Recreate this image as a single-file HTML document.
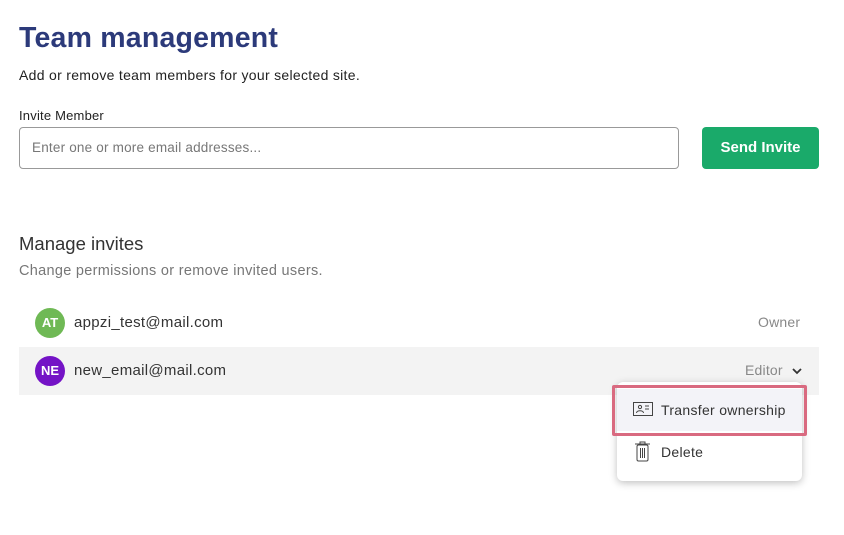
<!DOCTYPE html>
<html><head><style>
*{margin:0;padding:0;box-sizing:border-box}
body{width:844px;height:535px;background:#fff;font-family:"Liberation Sans",sans-serif;position:relative;overflow:hidden;color:#222}
.a{position:absolute;white-space:nowrap}
h1{position:absolute;left:19px;top:22px;font-size:28.5px;font-weight:bold;color:#2c3a7a;letter-spacing:0.2px}
.av{position:absolute;width:30px;height:30px;border-radius:50%;color:#fff;font-weight:bold;font-size:13px;text-align:center;line-height:30px}
</style></head><body>
<h1>Team management</h1>
<div class="a" style="left:19px;top:67px;font-size:14px;letter-spacing:0.3px;color:#222">Add or remove team members for your selected site.</div>
<div class="a" style="left:19px;top:108px;font-size:13px;letter-spacing:0.2px;color:#222">Invite Member</div>
<div class="a" style="left:19px;top:127px;width:660px;height:42px;border:1px solid #999;border-radius:4px"></div>
<div class="a" style="left:32px;top:140px;font-size:13.5px;letter-spacing:0.2px;color:#777">Enter one or more email addresses...</div>
<div class="a" style="left:702px;top:127px;width:117px;height:42px;background:#1aaa6a;border-radius:4px;color:#fff;font-weight:bold;font-size:15px;text-align:center;line-height:42px">Send Invite</div>
<div class="a" style="left:19px;top:233px;font-size:18.5px;color:#333">Manage invites</div>
<div class="a" style="left:19px;top:263px;font-size:14.5px;letter-spacing:0.3px;color:#777">Change permissions or remove invited users.</div>
<div class="av" style="left:35px;top:308px;background:#6fb955">AT</div>
<div class="a" style="left:74px;top:314px;font-size:15px;letter-spacing:0.3px;color:#333">appzi_test@mail.com</div>
<div class="a" style="left:758px;top:314px;font-size:14px;letter-spacing:0.2px;color:#888">Owner</div>
<div class="a" style="left:19px;top:347px;width:800px;height:48px;background:#f3f3f3"></div>
<div class="av" style="left:35px;top:356px;background:#7413c6">NE</div>
<div class="a" style="left:74px;top:362px;font-size:15px;letter-spacing:0.3px;color:#333">new_email@mail.com</div>
<div class="a" style="left:745px;top:362px;font-size:14px;letter-spacing:0.2px;color:#888">Editor</div>
<svg class="a" style="left:791px;top:366px" width="12" height="10"><path d="M2 3l4 4 4-4" stroke="#333" stroke-width="1.8" fill="none"/></svg>
<div class="a" style="left:617px;top:382px;width:185px;height:99px;background:#fff;border-radius:6px;box-shadow:0 2px 8px rgba(0,0,0,.25)"></div>
<div class="a" style="left:617px;top:389px;width:185px;height:42px;background:#f3f3f8"></div>
<div class="a" style="left:612px;top:385px;width:195px;height:51px;border:3px solid #d96a80;border-radius:2px"></div>
<svg class="a" style="left:633px;top:402px" width="20" height="15"><rect x="0.5" y="0.5" width="19" height="13" fill="none" stroke="#444"/><circle cx="7" cy="5" r="1.6" fill="none" stroke="#444"/><path d="M3.5 11c0-3 7-3 7 0" fill="none" stroke="#444"/><path d="M12 4h4M12 7h4" stroke="#444"/></svg>
<div class="a" style="left:661px;top:402px;font-size:14px;letter-spacing:0.3px;color:#333">Transfer ownership</div>
<svg class="a" style="left:634px;top:441px" width="17" height="21"><path d="M1 3h15M6 3V1h5v2" fill="none" stroke="#444"/><rect x="3" y="4" width="11" height="16" rx="1.5" fill="none" stroke="#444"/><path d="M6.5 7v10M8.5 7v10M10.5 7v10" stroke="#444"/></svg>
<div class="a" style="left:661px;top:444px;font-size:14px;letter-spacing:0.3px;color:#333">Delete</div>
</body></html>
